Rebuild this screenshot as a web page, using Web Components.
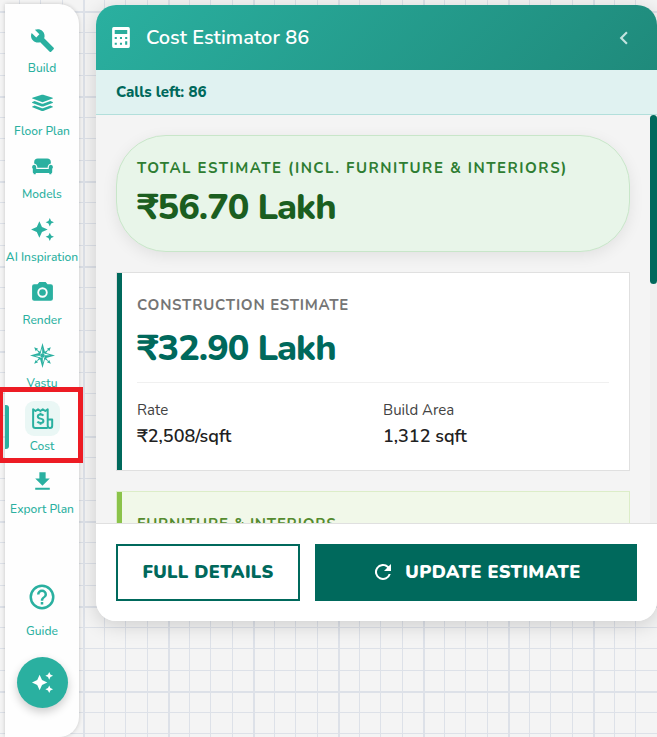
<!DOCTYPE html>
<html lang="en">

<head>
    <meta charset="UTF-8">
    <meta name="viewport" content="width=device-width, initial-scale=1.0">
    <title>Cost Estimator</title>
    <style>
        body {
            --teal: #2ab0a0;
            --dark: #00695c;
            margin: 0px;
            font-family: Nunito, Lato, "Noto Sans", sans-serif;
            color: #212121;
        }
    </style>
</head>

<body>

    <plan-canvas>
        <side-bar slot="nav">
            <nav-item icon="build">Build</nav-item>
            <nav-item icon="layers">Floor Plan</nav-item>
            <nav-item icon="sofa">Models</nav-item>
            <nav-item icon="sparkle">AI Inspiration</nav-item>
            <nav-item icon="camera">Render</nav-item>
            <nav-item icon="compass">Vastu</nav-item>
            <nav-item icon="receipt" active>Cost</nav-item>
            <nav-item icon="download">Export Plan</nav-item>
            <nav-item slot="foot" icon="help" large>Guide</nav-item>
        </side-bar>
        <cost-panel calls="86">
            <span slot="title">Cost Estimator 86</span>
            <estimate-card kind="total" amount="₹56.70 Lakh">Total Estimate (incl. Furniture &amp; Interiors)</estimate-card>
            <estimate-card kind="build" amount="₹32.90 Lakh">Construction Estimate
                <stat-pair slot="stats" name="Rate">₹2,508/sqft</stat-pair>
                <stat-pair slot="stats" name="Build Area">1,312 sqft</stat-pair>
            </estimate-card>
            <estimate-card kind="interior">Furniture &amp; Interiors</estimate-card>
        </cost-panel>
    </plan-canvas>

    <!-- page with the drawing grid behind everything -->
    <template id="canvas-tpl">
        <style>
            :host {
                --line: #dde1e8;
                display: flex;
                gap: 17px;
                box-sizing: border-box;
                height: 100vh;
                padding: 4px 0 0 5px;
                overflow: hidden;
                background-color: #f4f4f4;
                background-image:
                    linear-gradient(90deg, var(--line) 2px, transparent 2px 21px, var(--line) 21px 22px, transparent 22px 42px, var(--line) 42px 43px, transparent 43px 64px, var(--line) 64px 65px, transparent 65px),
                    linear-gradient(var(--line) 2px, transparent 2px 21px, var(--line) 21px 22px, transparent 22px 42px, var(--line) 42px 43px, transparent 43px 64px, var(--line) 64px 65px, transparent 65px);
                background-size: 85px 85px;
                background-position: 83px 11px;
            }
        </style>
        <slot name="nav"></slot>
        <slot></slot>
    </template>

    <template id="side-tpl">
        <style>
            :host {
                position: relative;
                z-index: 1;
                flex: none;
                width: 74px;
                display: flex;
                flex-direction: column;
                box-sizing: border-box;
                padding: 19px 0 29px;
                border-radius: 0 20px 20px 0;
                background: #fefefe;
                box-shadow: 0 0 4px rgba(0, 0, 0, .18);
            }

            nav {
                display: flex;
                flex-direction: column;
                gap: 8px;
            }

            .foot {
                display: flex;
                flex-direction: column;
                align-items: center;
                gap: 16px;
                margin-top: auto;
            }

            .foot ::slotted(*) {
                align-self: stretch;
            }

            .fab {
                --size: 23px;
                width: 51px;
                height: 51px;
                display: grid;
                place-items: center;
                border: 0;
                border-radius: 50%;
                background: var(--teal);
                color: #fff;
                box-shadow: 0 4px 10px rgba(0, 0, 0, .2);
            }
        </style>
        <nav>
            <slot></slot>
        </nav>
        <div class="foot">
            <slot name="foot"></slot>
            <button class="fab" aria-label="Assistant"><ui-icon name="sparkle"></ui-icon></button>
        </div>
    </template>

    <template id="item-tpl">
        <style>
            :host {
                display: block;
                position: relative;
            }

            button {
                width: 100%;
                display: flex;
                flex-direction: column;
                align-items: center;
                border: 0;
                padding: 0;
                background: none;
                color: var(--teal);
                font: 500 12px/20px Nunito, Lato, sans-serif;
                white-space: nowrap;
            }

            .box {
                width: 35px;
                height: 35px;
                display: grid;
                place-items: center;
                border-radius: 9px;
            }

            :host([active]) .box {
                background: #eaf7f5;
            }

            :host([large]) .box {
                --size: 30px;
                margin-bottom: 7px;
            }

            :host([active])::before {
                content: "";
                position: absolute;
                left: 0;
                top: 4px;
                width: 4px;
                height: 44px;
                border-radius: 0 3px 3px 0;
                background: var(--teal);
            }

            /* red frame round the current tool */
            :host([active])::after {
                content: "";
                position: absolute;
                inset: -14px -4px -7px -7px;
                border: 5px solid #ed1c24;
                pointer-events: none;
            }

            :host([active]) {
                z-index: 1;
            }
        </style>
        <button>
            <span class="box"><ui-icon></ui-icon></span>
            <span><slot></slot></span>
        </button>
    </template>

    <template id="panel-tpl">
        <style>
            :host {
                flex: 1;
                min-width: 0;
                display: flex;
                flex-direction: column;
                height: calc(100vh - 121px);
                margin-top: 1px;
                border-radius: 20px;
                overflow: hidden;
                background: #f4f4f4;
                box-shadow: 0 4px 20px rgba(0, 0, 0, .16);
            }

            header {
                flex: none;
                display: flex;
                align-items: center;
                gap: 12px;
                height: 65px;
                box-sizing: border-box;
                padding: 0 20px 0 13px;
                background: linear-gradient(135deg, #2ab0a0, #1f8a7b);
                color: #fff;
            }

            h1 {
                flex: 1;
                font: 600 20px/28px Nunito, Lato, sans-serif;
                margin: 0;
            }

            header button {
                --size: 26px;
                border: 0;
                padding: 0;
                background: none;
                color: #c3e3df;
            }

            .calls {
                flex: none;
                height: 45px;
                box-sizing: border-box;
                padding: 0 20px;
                border-bottom: 1px solid #b2dfdb;
                background: #e0f2f1;
                color: var(--dark);
                font-size: 15px;
                font-weight: 800;
                line-height: 44px;
            }

            .body {
                flex: 1;
                min-height: 0;
                display: flex;
            }

            .list {
                flex: 1;
                display: flex;
                flex-direction: column;
                gap: 20px;
                padding: 20px;
                overflow: auto;
                scrollbar-width: none;
            }

            .track {
                flex: none;
                width: 7px;
                background: #f0f0f0;
            }

            .thumb {
                height: 169px;
                border-radius: 4px;
                background: var(--dark);
            }

            footer {
                flex: none;
                display: grid;
                grid-template-columns: 4fr 7fr;
                gap: 15px;
                padding: 20px;
                border-top: 1px solid #e0e0e0;
                background: #fff;
            }

            footer button {
                --size: 24px;
                display: flex;
                align-items: center;
                justify-content: center;
                gap: 10px;
                height: 57px;
                padding: 0 0 2px;
                border: 2px solid var(--dark);
                background: #fff;
                color: var(--dark);
                font: 900 18px/24px Nunito, Lato, sans-serif;
                letter-spacing: 0.02em;
                text-transform: uppercase;
                white-space: nowrap;
            }

            footer .primary {
                background: var(--dark);
                color: #fff;
            }
        </style>
        <header>
            <ui-icon name="calculator"></ui-icon>
            <h1><slot name="title"></slot></h1>
            <button aria-label="Collapse"><ui-icon name="chevron"></ui-icon></button>
        </header>
        <div class="calls"></div>
        <div class="body">
            <div class="list"><slot></slot></div>
            <div class="track"><div class="thumb"></div></div>
        </div>
        <footer>
            <button>Full Details</button>
            <button class="primary"><ui-icon name="refresh"></ui-icon>Update Estimate</button>
        </footer>
    </template>

    <template id="card-tpl">
        <style>
            :host {
                flex: none;
                display: block;
                box-sizing: border-box;
                padding: 20px;
                border: 1px solid #e0e0e0;
                background: #fff;
                color: var(--dark);
            }

            h2 {
                margin: 0;
                color: #757575;
                font-size: 15px;
                font-weight: 700;
                line-height: 24px;
                letter-spacing: 0.05em;
                text-transform: uppercase;
                white-space: nowrap;
            }

            .amount {
                margin-top: 4px;
                font-size: 36px;
                font-weight: 800;
                line-height: 47px;
                letter-spacing: -1px;
            }

            .stats {
                display: grid;
                grid-template-columns: 1fr 1fr;
                gap: 20px;
                border-top: 1px solid #f0f0f0;
                padding-top: 15px;
                margin-top: 10px;
            }

            :host([kind="total"]) {
                border-color: #c8e6c9;
                border-radius: 50px;
                background: #e8f5e9;
                color: #1b5e20;
                box-shadow: 0 4px 15px rgba(0, 0, 0, .08);
            }

            :host([kind="total"]) h2 {
                color: #2e7d32;
                letter-spacing: 0.1em;
            }

            :host([kind="build"]) {
                box-shadow: inset 5px 0 0 var(--dark);
            }

            :host([kind="build"]) .amount {
                margin-top: 8px;
            }

            :host([kind="interior"]) {
                border-color: #dcedc8;
                background: #f1f8e9;
                box-shadow: inset 5px 0 0 #8bc34a;
            }

            :host([kind="interior"]) h2 {
                color: #558b2f;
            }
        </style>
        <h2><slot></slot></h2>
        <div class="amount"></div>
        <div class="stats"><slot name="stats"></slot></div>
    </template>

    <template id="stat-tpl">
        <style>
            :host {
                display: block;
                color: #212121;
            }

            .name {
                color: #424242;
                font-size: 15px;
                line-height: 24px;
            }

            .value {
                font-size: 18px;
                font-weight: 600;
                line-height: 28px;
            }
        </style>
        <div class="name"></div>
        <div class="value"><slot></slot></div>
    </template>

    <script>
        // 24x24 icons, filled with the current colour
        const icons = {
            sparkle: '<path d="M19 9l1.25-2.75L23 5l-2.75-1.25L19 1l-1.25 2.75L15 5l2.75 1.25zM11.5 9.5L9 4 6.5 9.5 1 12l5.5 2.5L9 20l2.5-5.5L17 12zM19 15l-1.25 2.75L15 19l2.75 1.25L19 23l1.25-2.75L23 19l-2.75-1.25z"/>',
            build: '<path d="M22.7 19l-9.1-9.1c.9-2.3.4-5-1.5-6.9-2-2-5-2.4-7.4-1.3L9 6 6 9 1.6 4.7C.4 7.1.9 10.1 2.9 12.1c1.9 1.9 4.6 2.4 6.9 1.5l9.1 9.1c.4.4 1 .4 1.4 0l2.3-2.3c.5-.4.5-1.1.1-1.4z"/>',
            layers: '<path d="M2.300 6.400l9-2.800q.7-.2 1.400 0l9 2.800q.8.400 0 .9l-9 3.300q-.7.300-1.400 0l-9-3.300q-.8-.5 0-.9z"/><path d="M2.300 10.500l2.100-.8 6.500 2.400q1.100.4 2.200 0l6.500-2.400 2.100.8q.8.400 0 .9l-9 3.400q-.7.300-1.400 0l-9-3.400q-.8-.5 0-.9zM2.300 14.800l2.100-.8 6.500 2.400q1.100.4 2.200 0l6.500-2.400 2.100.8q.8.400 0 .9l-9 3.400q-.7.300-1.400 0l-9-3.400q-.8-.5 0-.9z"/>',
            sofa: '<path d="M4 9.200V8q0-3.600 3.600-3.600h8.800q3.600 0 3.600 3.600v1.200q-2.500.3-3 2.800v1.300H7V12q-.5-2.500-3-2.800z"/><path d="M4 10.300q2 .2 2 2.200v2h12v-2q0-2 2-2.200 2 .1 2 2.200 0 1-.7 1.700v3.300q0 .8-.8.800v1.200h-2v-1.200h-13v1.200h-2v-1.200q-.8 0-.8-.8v-3.300Q2 13.500 2 12.500q0-2.100 2-2.200z"/>',
            camera: '<path fill-rule="evenodd" d="M9 2L7.200 4H4q-2 0-2 2v12q0 2 2 2h16q2 0 2-2V6q0-2-2-2h-3.200L15 2zm3 15a5 5 0 1 1 0-10 5 5 0 0 1 0 10z"/><circle cx="12" cy="12" r="3.200"/>',
            compass: '<path d="M12 0l2.300 8.500 3.500-2.300-2.300 3.500L24 12l-8.500 2.300 2.300 3.500-3.500-2.300L12 24l-2.300-8.500-3.500 2.300 2.300-3.500L0 12l8.500-2.300-2.300-3.500 3.500 2.300z"/><path fill="#fff" d="M11.700 4.500V11L10.400 9zM19.500 11.700H13l2-1.300zM12.300 19.500V13l1.300 2zM4.500 12.300H11l-2 1.300zM12.700 10.200l1.300-.6-.1 1.400zM13.800 12.700l.6 1.300-1.400-.1zM11.300 13.800l-1.300.6.1-1.400zM10.200 11.300L9.600 10l1.400.1z"/><path d="M4 4l3.800 1.500L5.500 7.800zM20 4l-1.500 3.800-2.300-2.300zM20 20l-3.800-1.500 2.300-2.300zM4 20l1.500-3.800 2.300 2.300z"/>',
            receipt: '<g fill="none" stroke="currentColor" stroke-width="1.900" stroke-linejoin="round"><path d="M17 21.200H5.200Q3 21.200 3 19V3.200l2.300 1.600 2.400-1.600L10 4.800l2.300-1.600 2.400 1.600L17 3.200V18.800q0 2.400 2.200 2.400 2.100 0 2.100-2.200V12.900H17"/><path stroke-width="1.900" d="M12.900 9.200q-.8-1-2.800-1-2.600 0-2.600 1.900 0 1.600 2.600 2 2.800.4 2.800 2.200 0 1.900-2.800 1.900-2.200 0-3-1.200M10.100 6.400v1.800m0 8v1.900"/></g>',
            download: '<path d="M5 20h14v-2H5zM19 9h-4V3H9v6H5l7 7z"/>',
            help: '<path d="M11 18h2v-2h-2zm1-16a10 10 0 1 0 0 20 10 10 0 0 0 0-20zm0 18a8 8 0 1 1 0-16 8 8 0 0 1 0 16zm0-14a4 4 0 0 0-4 4h2a2 2 0 1 1 4 0c0 2-3 1.750-3 5h2c0-2.250 3-2.500 3-5a4 4 0 0 0-4-4z"/>',
            calculator: '<path fill-rule="evenodd" d="M4.500 2h14q1.500 0 1.500 1.500v17q0 1.500-1.500 1.500h-14Q3 22 3 20.500v-17Q3 2 4.500 2zM5.500 4.700v4h12v-4zM5.500 11.500v2h2v-2zm5 0v2h2v-2zm5 0v2h2v-2zM5.500 17v2h2v-2zm5 0v2h2v-2zm5-1.500V19h2v-3.500z"/>',
            chevron: '<path d="M15.400 7.400L14 6l-6 6 6 6 1.400-1.400L10.800 12z"/>',
            refresh: '<path d="M17.650 6.350A8 8 0 1 0 19.730 14h-2.080A6 6 0 1 1 12 6c1.660 0 3.140.690 4.220 1.780L13 11h7V4z"/>'
        };

        // copies a template into a new open shadow root
        function attach(el, id) {
            const root = el.attachShadow({ mode: 'open' });
            root.appendChild(document.querySelector(id).content.cloneNode(true));
            return root;
        }

        class UiIcon extends HTMLElement {
            static get observedAttributes() {
                return ['name'];
            }
            constructor() {
                super();
                this.attachShadow({ mode: 'open' });
            }
            attributeChangedCallback() {
                this.shadowRoot.innerHTML = `
                    <style>
                        :host { display: block; }
                        svg { display: block; width: var(--size, 25px); height: var(--size, 25px); fill: currentColor; }
                    </style>
                    <svg viewBox="0 0 24 24" aria-hidden="true">${icons[this.getAttribute('name')]}</svg>`;
            }
        }

        class PlanCanvas extends HTMLElement {
            constructor() {
                super();
                attach(this, '#canvas-tpl');
            }
        }

        class SideBar extends HTMLElement {
            constructor() {
                super();
                attach(this, '#side-tpl');
            }
        }

        class NavItem extends HTMLElement {
            constructor() {
                super();
                const root = attach(this, '#item-tpl');
                root.querySelector('ui-icon').setAttribute('name', this.getAttribute('icon'));
            }
        }

        class CostPanel extends HTMLElement {
            constructor() {
                super();
                const root = attach(this, '#panel-tpl');
                root.querySelector('.calls').textContent = 'Calls left: ' + this.getAttribute('calls');
            }
        }

        class EstimateCard extends HTMLElement {
            constructor() {
                super();
                const root = attach(this, '#card-tpl');
                root.querySelector('.amount').textContent = this.getAttribute('amount');
                // no divider on cards without figures
                if (!this.querySelector('[slot=stats]')) {
                    root.querySelector('.stats').remove();
                }
            }
        }

        class StatPair extends HTMLElement {
            constructor() {
                super();
                const root = attach(this, '#stat-tpl');
                root.querySelector('.name').textContent = this.getAttribute('name');
            }
        }

        customElements.define('ui-icon', UiIcon);
        customElements.define('plan-canvas', PlanCanvas);
        customElements.define('side-bar', SideBar);
        customElements.define('nav-item', NavItem);
        customElements.define('cost-panel', CostPanel);
        customElements.define('estimate-card', EstimateCard);
        customElements.define('stat-pair', StatPair);
    </script>
</body>

</html>
